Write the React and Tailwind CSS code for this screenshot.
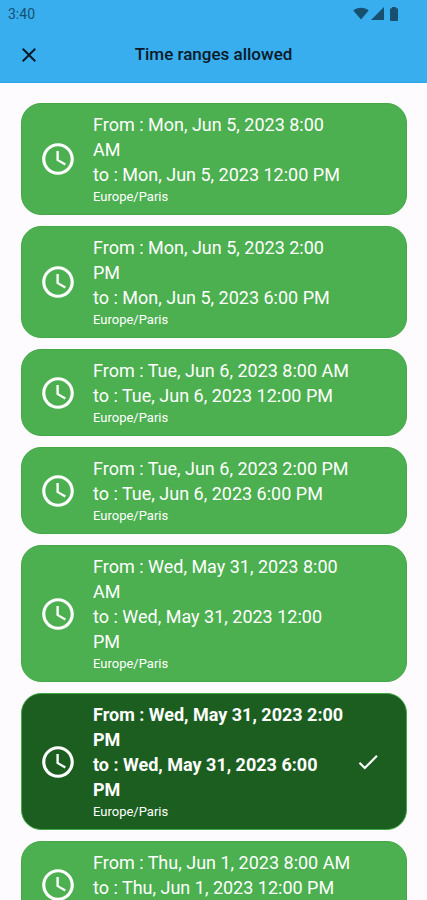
import React, { useState } from "react";

const RANGES = [
  { from: "Mon, Jun 5, 2023 8:00 AM", to: "Mon, Jun 5, 2023 12:00 PM" },
  { from: "Mon, Jun 5, 2023 2:00 PM", to: "Mon, Jun 5, 2023 6:00 PM" },
  { from: "Tue, Jun 6, 2023 8:00 AM", to: "Tue, Jun 6, 2023 12:00 PM" },
  { from: "Tue, Jun 6, 2023 2:00 PM", to: "Tue, Jun 6, 2023 6:00 PM" },
  { from: "Wed, May 31, 2023 8:00 AM", to: "Wed, May 31, 2023 12:00 PM" },
  { from: "Wed, May 31, 2023 2:00 PM", to: "Wed, May 31, 2023 6:00 PM" },
  { from: "Thu, Jun 1, 2023 8:00 AM", to: "Thu, Jun 1, 2023 12:00 PM" },
];

function ClockIcon() {
  return (
    <svg viewBox="0 0 24 24" className="size-[38px] shrink-0" fill="currentColor" aria-hidden="true">
      <path d="M11.99 2C6.47 2 2 6.48 2 12s4.47 10 9.99 10C17.52 22 22 17.52 22 12S17.52 2 11.99 2zM12 20c-4.42 0-8-3.58-8-8s3.58-8 8-8 8 3.58 8 8-3.58 8-8 8zm.5-13H11v6l5.25 3.15.75-1.23-4.5-2.67z" />
    </svg>
  );
}

function CheckIcon() {
  return (
    <svg viewBox="0 0 24 24" className="size-[26px]" fill="currentColor" aria-hidden="true">
      <path d="M9 16.17 4.83 12l-1.42 1.41L9 19 21 7l-1.41-1.41z" />
    </svg>
  );
}

function StatusBar() {
  return (
    <div className="flex h-[27px] items-center justify-between pl-2 pr-[27px] text-[#17506f]">
      <span className="text-sm leading-4">3:40</span>
      <div className="flex items-center gap-0.5">
        <svg viewBox="0 0 16 13" className="h-[13px] w-4" fill="currentColor" aria-hidden="true">
          <path d="M8 12.6.3 3.4C2.3 1.7 5 .7 8 .7s5.7 1 7.700 2.700z" />
        </svg>
        <svg viewBox="0 0 13 13" className="size-[13px]" fill="currentColor" aria-hidden="true">
          <path d="M0 13 13 0v13z" />
        </svg>
        <svg viewBox="0 0 14 14" className="size-3.5" fill="currentColor" aria-hidden="true">
          <path d="M6 0h4v1.300h1.200c.5 0 .8.300.8.800v11.100c0 .5-.3.800-.8.800H4.800c-.5 0-.8-.3-.8-.8V2.100c0-.5.3-.8.8-.8H6z" />
        </svg>
      </div>
    </div>
  );
}

function RangeCard({ range, selected, onSelect }) {
  return (
    <button
      type="button"
      aria-pressed={selected}
      onClick={onSelect}
      className={`flex w-full items-center rounded-[20px] border border-[#43a947] py-2 pl-[17px] pr-[25px] text-left text-white ${
        selected ? "bg-[#1b5e20]" : "bg-[#4caf50]"
      }`}
    >
      <ClockIcon />
      <span className="ml-4 min-w-0 flex-1">
        <span className={`block text-lg leading-[25px] ${selected ? "font-bold" : ""}`}>
          <span className="block">{`From : ${range.from}`}</span>
          <span className="block">{`to : ${range.to}`}</span>
        </span>
        <span className="block text-[13px] leading-[19px]">Europe/Paris</span>
      </span>
      <span className={`flex shrink-0 justify-end ${selected ? "w-9" : "w-[30px]"}`}>
        {selected && <CheckIcon />}
      </span>
    </button>
  );
}

export default function App() {
  const [selected, setSelected] = useState(5);
  return (
    <div className="h-screen overflow-hidden bg-[#fefbff] font-['Roboto','Liberation_Sans',sans-serif]">
      <header className="border-b border-[#2ba3e4] bg-[#39aeef]">
        <StatusBar />
        <div className="grid h-[55px] grid-cols-[48px_1fr_48px] items-center px-[5px] text-[#0b1a26]">
          <button type="button" aria-label="Close" className="flex size-12 items-center justify-center">
            <svg viewBox="0 0 24 24" className="size-6" fill="currentColor" aria-hidden="true">
              <path d="M19 6.410 17.590 5 12 10.590 6.410 5 5 6.410 10.590 12 5 17.590 6.410 19 12 13.410 17.590 19 19 17.590 13.410 12z" />
            </svg>
          </button>
          <h1 className="text-center text-[17px] font-medium">Time ranges allowed</h1>
        </div>
      </header>
      <main className="flex flex-col gap-[11px] pl-[21px] pr-5 pt-5">
        {RANGES.map((range, i) => (
          <RangeCard key={range.from} range={range} selected={i === selected} onSelect={() => setSelected(i)} />
        ))}
      </main>
    </div>
  );
}
